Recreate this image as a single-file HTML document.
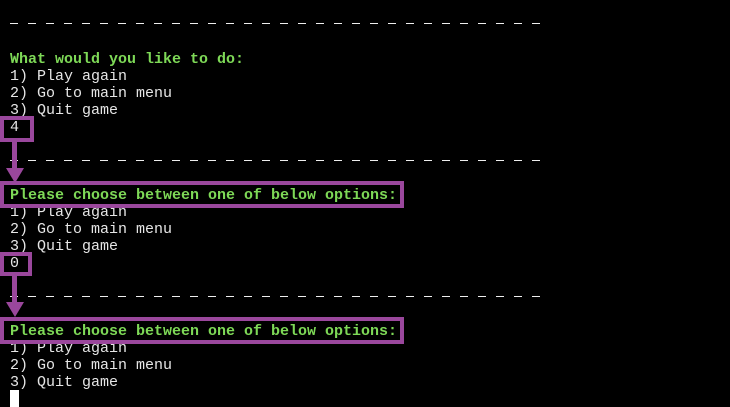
<!DOCTYPE html>
<html><head><style>
body{margin:0;width:730px;height:407px;background:#000;overflow:hidden;position:relative;font-family:"Liberation Mono","Courier New",monospace;font-size:15px;}
.l{position:absolute;left:10px;height:17px;line-height:17px;color:#e6e6e6;white-space:pre;margin-top:1px;}
.g{color:#7ed957;font-weight:bold;}
.d{position:absolute;left:10px;width:531px;height:1px;background:repeating-linear-gradient(90deg,#eee 0 8px,transparent 8px 18px);}
.b{position:absolute;border:4px solid #9a479c;box-sizing:border-box;}
.s{position:absolute;width:5px;background:#9a479c;}
.t{position:absolute;width:0;height:0;border-left:9px solid transparent;border-right:9px solid transparent;border-top:15px solid #9a479c;}
</style></head><body>
<div class="d" style="top:23px"></div>
<div class="l g" style="top:50px">What would you like to do:</div>
<div class="l" style="top:67px">1) Play again</div>
<div class="l" style="top:84px">2) Go to main menu</div>
<div class="l" style="top:101px">3) Quit game</div>
<div class="l" style="top:118px">4</div>
<div class="d" style="top:160px"></div>
<div class="l g" style="top:186px">Please choose between one of below options:</div>
<div class="l" style="top:203px">1) Play again</div>
<div class="l" style="top:220px">2) Go to main menu</div>
<div class="l" style="top:237px">3) Quit game</div>
<div class="l" style="top:254px">0</div>
<div class="d" style="top:296px"></div>
<div class="l g" style="top:322px">Please choose between one of below options:</div>
<div class="l" style="top:339px">1) Play again</div>
<div class="l" style="top:356px">2) Go to main menu</div>
<div class="l" style="top:373px">3) Quit game</div>
<div style="position:absolute;left:10px;top:390px;width:9px;height:17px;background:#fff"></div>

<div class="b" style="left:0;top:116px;width:34px;height:26px"></div>
<div class="s" style="left:12px;top:142px;height:27px"></div>
<div class="t" style="left:6px;top:168px"></div>
<div class="b" style="left:0;top:181px;width:404px;height:27px"></div>

<div class="b" style="left:0;top:252px;width:32px;height:24px"></div>
<div class="s" style="left:12px;top:276px;height:27px"></div>
<div class="t" style="left:6px;top:302px"></div>
<div class="b" style="left:0;top:317px;width:404px;height:27px"></div>
</body></html>
